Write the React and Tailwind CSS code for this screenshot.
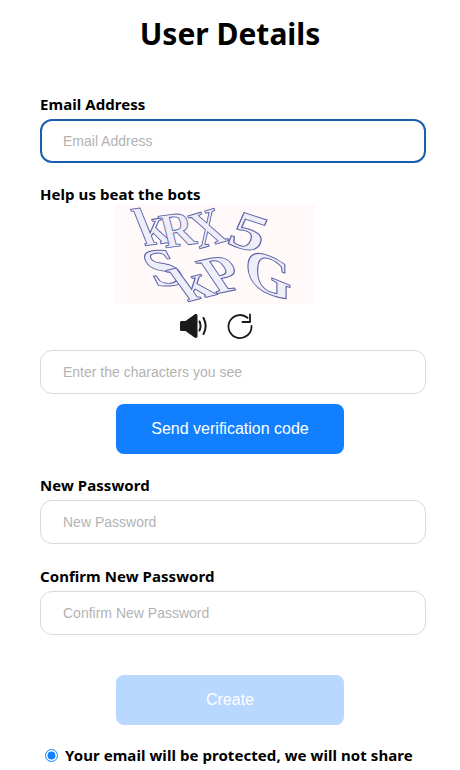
function Field({ label, placeholder, focused }) {
  return (
    <label className="flex flex-col">
      <span className="font-['Noto_Sans',sans-serif] text-[15px] leading-[20px] font-bold tracking-[0.06px] text-black">{label}</span>
      <input
        readOnly
        placeholder={placeholder}
        className={
          focused
            ? "mt-[5px] h-[44px] w-[386px] rounded-[12px] border-2 border-[#1a5fae] bg-white pl-[21px] font-['Liberation_Sans',sans-serif] text-[14px] outline-none placeholder:text-[#b3b3b3]"
            : "mt-[5px] h-[44px] w-[386px] rounded-[12px] border border-[#d9d9d9] bg-white pl-[22px] font-['Liberation_Sans',sans-serif] text-[14px] outline-none placeholder:text-[#b3b3b3]"
        }
      />
    </label>
  );
}

function Captcha() {
  const letters = [
    ["k", "translate(29 42) rotate(-8) skewX(14) scale(1.35 1.45)"],
    ["R", "translate(50 44) rotate(-8) skewX(6) scale(1.2 1.3)"],
    ["X", "translate(84 45) rotate(-16) skewX(6) scale(1.15 1.4)"],
    ["5", "translate(110 39) rotate(18) skewX(-6) scale(1.85 1.4)"],
    ["S", "translate(41 83) rotate(-6) skewX(22) scale(1.55 1.45)"],
    ["k", "translate(72 98) rotate(-14) skewX(22) scale(1.5 1.35)"],
    ["P", "translate(101 90) rotate(-12) skewX(22) scale(1.45 1.45)"],
    ["G", "translate(130 80) rotate(22) skewX(22) scale(1.7 1.4)"],
  ];
  return (
    <svg viewBox="0 0 200 100" className="ml-[75px] block h-[100px] w-[200px] overflow-hidden bg-[#fff9fa]" aria-label="captcha">
      {letters.map(([c, t], i) => (
        <text
          key={i}
          transform={t}
          fontFamily="Liberation Serif, serif"
          fontWeight="bold"
          fontSize="38"
          fill="#eeeef8"
          stroke="#5f62a6"
          strokeWidth="0.7"
        >
          {c}
        </text>
      ))}
    </svg>
  );
}

export default function App() {
  return (
    <div className="h-[770px] w-[460px] overflow-hidden bg-white px-[40px]">
      <h1 className="pt-[13px] text-center font-['Noto_Sans',sans-serif] text-[30px] leading-[42px] font-bold text-black">User Details</h1>
      <div className="mt-[39px]">
        <Field label="Email Address" placeholder="Email Address" focused />
      </div>
      <div className="mt-[21px] font-['Noto_Sans',sans-serif] text-[15px] leading-[20px] font-bold tracking-[0.06px] text-black">Help us beat the bots</div>
      <Captcha />
      <div className="mt-[9px] ml-[140px] flex gap-[20px]">
        <svg width="27" height="26" viewBox="0 0 27 26" fill="none">
          <path d="M0 9.500c0-1 .6-1.600 1.600-1.600H5.500L14.500 1.500c1.200-.9 3-.3 3 1.300v20.400c0 1.600-1.800 2.200-3 1.300L5.500 18.100H1.600C.6 18.100 0 17.500 0 16.500z" fill="#1a1a1a" />
          <path d="M19.500 8.500c1.300 2.800 1.300 6.200 0 9M23.500 5c2.700 5 2.700 11 0 16" stroke="#1a1a1a" strokeWidth="2" strokeLinecap="round" />
        </svg>
        <svg width="26" height="26" viewBox="0 0 26 26" fill="none">
          <path d="M20.500 4.800A11.500 11.500 0 1 0 24.500 13" stroke="#1a1a1a" strokeWidth="1.800" strokeLinecap="round" />
          <path d="M23 1.500V9h-7.500" stroke="#1a1a1a" strokeWidth="1.800" strokeLinecap="round" strokeLinejoin="round" />
        </svg>
      </div>
      <input
        readOnly
        placeholder="Enter the characters you see"
        className="mt-[11px] block h-[44px] w-[386px] rounded-[12px] border border-[#d9d9d9] bg-white pl-[22px] font-['Liberation_Sans',sans-serif] text-[14px] outline-none placeholder:text-[#b3b3b3]"
      />
      <div className="mt-[10px] flex justify-center">
        <button className="h-[50px] w-[228px] rounded-[8px] bg-[#127fff] font-['Liberation_Sans',sans-serif] text-[16px] text-white">Send verification code</button>
      </div>
      <div className="mt-[21px]">
        <Field label="New Password" placeholder="New Password" />
      </div>
      <div className="mt-[22px]">
        <Field label="Confirm New Password" placeholder="Confirm New Password" />
      </div>
      <div className="mt-[40px] flex justify-center">
        <button className="h-[50px] w-[228px] rounded-[8px] bg-[#b8d8ff] font-['Liberation_Sans',sans-serif] text-[16px] text-white">Create</button>
      </div>
      <label className="mt-[20px] ml-[5px] flex items-center gap-[7px] whitespace-nowrap">
        <input type="radio" defaultChecked className="m-0 h-[13px] w-[13px] accent-[#127fff]" />
        <span className="font-['Noto_Sans',sans-serif] text-[15px] leading-[20px] font-bold tracking-[0.06px] text-black">Your email will be protected, we will not share</span>
      </label>
    </div>
  );
}
